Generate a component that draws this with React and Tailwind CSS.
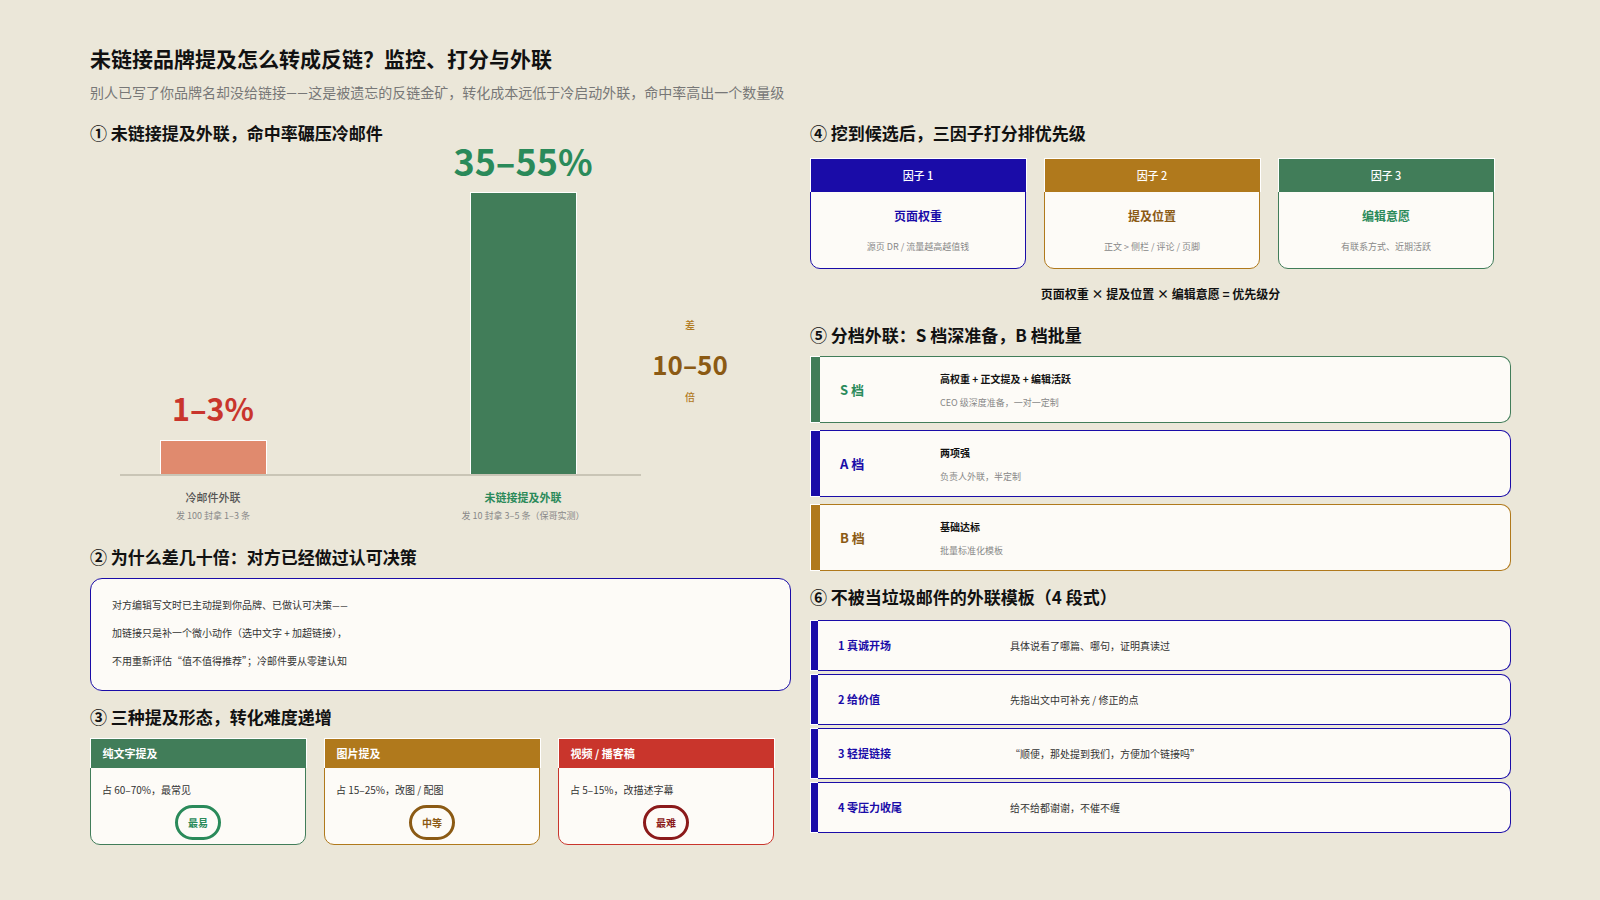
const Heading = ({ children, className = "" }) => (
  <h2 className={`h-6 text-[17px] leading-6 font-bold text-[#111] ${className}`}>{children}</h2>
)

const Dash = () => <span className="font-['Lato',sans-serif]">——</span>

const forms = [
  { title: "纯文字提及", desc: "占 60–70%\uFF0C最常见", tag: "最易", head: "bg-[#417d59]", border: "border-[#417d59]", ring: "border-[#2a8a5a]", text: "text-[#2a8a5a]" },
  { title: "图片提及", desc: "占 15–25%\uFF0C改图 / 配图", tag: "中等", head: "bg-[#b0791c]", border: "border-[#b0791c]", ring: "border-[#8b5a14]", text: "text-[#8b5a14]" },
  { title: "视频 / 播客稿", desc: "占 5–15%\uFF0C改描述字幕", tag: "最难", head: "bg-[#c9352c]", border: "border-[#c9352c]", ring: "border-[#8b1a1a]", text: "text-[#8b1a1a]" },
]

const factors = [
  { head: "因子 1", title: "页面权重", desc: "源页 DR / 流量越高越值钱", bg: "bg-[#1a0ca8]", border: "border-[#1a0ca8]", text: "text-[#1a0ca8]" },
  { head: "因子 2", title: "提及位置", desc: "正文 > 侧栏 / 评论 / 页脚", bg: "bg-[#b0791c]", border: "border-[#b0791c]", text: "text-[#8b5a14]" },
  { head: "因子 3", title: "编辑意愿", desc: "有联系方式、近期活跃", bg: "bg-[#417d59]", border: "border-[#417d59]", text: "text-[#2a8a5a]" },
]

const tiers = [
  { name: "S 档", main: "高权重 + 正文提及 + 编辑活跃", sub: "CEO 级深度准备\uFF0C一对一定制", bar: "bg-[#417d59]", border: "border-[#417d59]", text: "text-[#2a8a5a]" },
  { name: "A 档", main: "两项强", sub: "负责人外联\uFF0C半定制", bar: "bg-[#1a0ca8]", border: "border-[#1a0ca8]", text: "text-[#1a0ca8]" },
  { name: "B 档", main: "基础达标", sub: "批量标准化模板", bar: "bg-[#b0791c]", border: "border-[#b0791c]", text: "text-[#8b5a14]" },
]

const steps = [
  { name: "1 真诚开场", text: "具体说看了哪篇、哪句\uFF0C证明真读过" },
  { name: "2 给价值", text: "先指出文中可补充 / 修正的点" },
  { name: "3 轻提链接", text: "“顺便\uFF0C那处提到我们\uFF0C方便加个链接吗”" },
  { name: "4 零压力收尾", text: "给不给都谢谢\uFF0C不催不缠" },
]

const title = "未链接品牌提及怎么转成反链\uFF1F监控、打分与外联"

function Chart() {
  return (
    <div className="flex h-[380px]">
      <div className="ml-[30px] w-[521px]">
        <div className="flex h-[331px] items-end gap-[125px] border-b-2 border-[#c9c5b6]">
          <div className="flex w-[186px] flex-col items-center">
            <div className="mb-[14px] text-[30.5px] leading-9 font-bold text-[#c9352c]">1–3%</div>
            <div className="h-[34px] w-[107px] border-x border-t border-white bg-[#e08a6e]" />
          </div>
          <div className="flex w-[184px] flex-col items-center">
            <div className="mb-[12px] text-[36px] leading-10 font-bold text-[#2a8a5a]">35–55%</div>
            <div className="h-[282px] w-[107px] border-x border-t border-white bg-[#417d59]" />
          </div>
        </div>
        <div className="mt-[13px] flex gap-[125px] text-center">
          <div className="w-[186px]">
            <div className="text-[11px] leading-4 font-medium text-[#555]">冷邮件外联</div>
            <div className="mt-1 text-[9px] leading-[14px] text-[#888]">发 100 封拿 1–3 条</div>
          </div>
          <div className="w-[184px]">
            <div className="text-[11px] leading-4 font-bold text-[#2a8a5a]">未链接提及外联</div>
            <div className="mt-1 text-[9px] leading-[14px] text-[#888]">{"发 10 封拿 3–5 条\uFF08保哥实测\uFF09"}</div>
          </div>
        </div>
      </div>
      <div className="ml-[9px] flex w-[80px] flex-col items-center pt-[172px]">
        <div className="text-[10px] leading-4 font-medium text-[#b0791c]">差</div>
        <div className="mt-[13px] text-[26px] leading-9 font-bold text-[#8b5a14]">10–50</div>
        <div className="mt-[7px] text-[10px] leading-4 font-medium text-[#b0791c]">倍</div>
      </div>
    </div>
  )
}

export default function App() {
  return (
    <div lang="zh-CN" className="h-[900px] w-[1600px] overflow-hidden bg-[#ebe7d9] pt-[43px] pl-[90px] font-['Noto_Sans_CJK_SC','Noto_Sans',sans-serif]">
      <h1 className="h-[30px] text-[21px] leading-[30px] font-bold text-[#111]">{title}</h1>
      <p className="mt-[9px] h-5 text-[14px] leading-5 text-[#777]">
        别人已写了你品牌名却没给链接<Dash />{"这是被遗忘的反链金矿\uFF0C转化成本远低于冷启动外联\uFF0C命中率高出一个数量级"}
      </p>

      <div className="mt-[19px] grid w-[1421px] grid-cols-[701px_701px] gap-x-[19px]">
        <div>
          <Heading>{"① 未链接提及外联\uFF0C命中率碾压冷邮件"}</Heading>
          <Chart />

          <Heading className="mt-5">{"② 为什么差几十倍\uFF1A对方已经做过认可决策"}</Heading>
          <div className="mt-[9px] flex h-[113px] flex-col justify-center gap-y-3 rounded-xl border-[1.5px] border-[#1a0ca8] bg-[#fdfbf7] pb-1 pl-[21px] text-[10px] leading-4 text-[#333]">
            <p>对方编辑写文时已主动提到你品牌、已做认可决策<Dash /></p>
            <p>{"加链接只是补一个微小动作\uFF08选中文字 + 加超链接\uFF09\uFF0C"}</p>
            <p>{"不用重新评估“值不值得推荐”\uFF1B冷邮件要从零建认知"}</p>
          </div>

          <Heading className="mt-[14px]">{"③ 三种提及形态\uFF0C转化难度递增"}</Heading>
          <div className="mt-[9px] flex gap-x-[18px]">
            {forms.map((f) => (
              <div key={f.title} className={`flex h-[107px] w-[216px] flex-col rounded-b-[10px] border-[1.5px] bg-[#fdfbf7] ${f.border}`}>
                <div className={`-mx-[1.5px] -mt-[1.5px] flex h-[30px] items-center border-x border-t border-white pl-[12px] text-[11px] font-bold text-white ${f.head}`}>{f.title}</div>
                <p className="mt-[14px] pl-[11px] text-[10px] leading-4 text-[#333]">{f.desc}</p>
                <div className={`mx-auto mt-[7px] flex h-[35px] w-[46px] items-center justify-center rounded-[18px] border-[3px] text-[10px] font-bold ${f.ring} ${f.text}`}>{f.tag}</div>
              </div>
            ))}
          </div>
        </div>

        <div>
          <Heading>{"④ 挖到候选后\uFF0C三因子打分排优先级"}</Heading>
          <div className="mt-[13px] flex gap-x-[18px]">
            {factors.map((f) => (
              <div key={f.head} className={`h-[111px] w-[216px] rounded-b-[10px] border-[1.5px] bg-[#fdfbf7] text-center ${f.border}`}>
                <div className={`-mx-[1.5px] -mt-[1.5px] flex h-[34px] items-center justify-center border-x border-t border-white text-[11px] font-medium text-white ${f.bg}`}>{f.head}</div>
                <div className={`mt-[14px] text-[12px] leading-5 font-bold ${f.text}`}>{f.title}</div>
                <div className="mt-[13px] text-[9px] leading-4 text-[#888]">{f.desc}</div>
              </div>
            ))}
          </div>
          <div className="mt-[16px] h-[18px] text-center text-[12px] leading-[18px] font-bold text-[#111]">页面权重 × 提及位置 × 编辑意愿 = 优先级分</div>

          <Heading className="mt-5">{"⑤ 分档外联\uFF1AS 档深准备\uFF0CB 档批量"}</Heading>
          <div className="mt-[9px] flex flex-col gap-y-[7px]">
            {tiers.map((t) => (
              <div key={t.name} className="flex h-[67px]">
                <div className={`w-[10px] shrink-0 border-y border-l border-white ${t.bar}`} />
                <div className={`flex flex-1 items-center rounded-r-[10px] border-[1.5px] border-l-0 bg-[#fdfbf7] ${t.border}`}>
                  <div className={`w-[120px] pl-5 text-[13px] font-bold ${t.text}`}>{t.name}</div>
                  <div className="pt-0.5">
                    <div className="text-[10px] leading-4 font-bold text-[#111]">{t.main}</div>
                    <div className="mt-2 text-[9px] leading-4 text-[#888]">{t.sub}</div>
                  </div>
                </div>
              </div>
            ))}
          </div>

          <Heading className="mt-[14px]">{"⑥ 不被当垃圾邮件的外联模板\uFF084 段式\uFF09"}</Heading>
          <div className="mt-[11px] flex flex-col gap-y-[3px]">
            {steps.map((s) => (
              <div key={s.name} className="flex h-[51px]">
                <div className="w-2 shrink-0 border-y border-l border-white bg-[#1a0ca8]" />
                <div className="flex flex-1 items-center rounded-r-[10px] border-[1.5px] border-l-0 border-[#1a0ca8] bg-[#fdfbf7]">
                  <div className="w-[192px] pl-5 text-[11px] font-bold text-[#1a0ca8]">{s.name}</div>
                  <div className="text-[10px] text-[#333]">{s.text}</div>
                </div>
              </div>
            ))}
          </div>
        </div>
      </div>
    </div>
  )
}
